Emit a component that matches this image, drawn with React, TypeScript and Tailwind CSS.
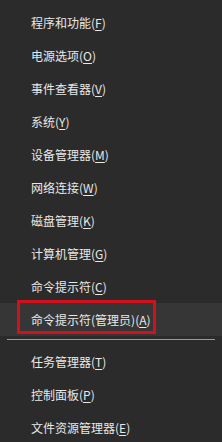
import React from "react";

interface Item {
  label: string;
  key: string;
  highlight?: boolean;
}

const top: Item[] = [
  { label: "程序和功能", key: "F" },
  { label: "电源选项", key: "O" },
  { label: "事件查看器", key: "V" },
  { label: "系统", key: "Y" },
  { label: "设备管理器", key: "M" },
  { label: "网络连接", key: "W" },
  { label: "磁盘管理", key: "K" },
  { label: "计算机管理", key: "G" },
  { label: "命令提示符", key: "C" },
  { label: "命令提示符(管理员)", key: "A", highlight: true },
];

const bottom: Item[] = [
  { label: "任务管理器", key: "T" },
  { label: "控制面板", key: "P" },
  { label: "文件资源管理器", key: "E" },
];

const Row: React.FC<{ item: Item }> = ({ item }) => (
  <div
    className={
      "relative flex h-[33px] items-center pl-[31px] text-[12px] text-[#e8e8e8] " +
      (item.highlight ? "bg-[#363636]" : "")
    }
  >
    <span>
      {item.label}(<span className="underline underline-offset-2">{item.key}</span>)
    </span>
    {item.highlight && (
      <div className="absolute left-[17px] top-[-3px] h-[34px] w-[139px] border-[3px] border-[#d3111c]" />
    )}
  </div>
);

const App: React.FC = () => {
  return (
    <div
      className="h-[442px] w-[222px] overflow-hidden bg-[#2b2b2b] pt-[6px]"
      style={{ fontFamily: '"Noto Sans CJK SC", "Noto Sans", sans-serif' }}
    >
      {top.map((it) => (
        <Row key={it.label} item={it} />
      ))}
      <div className="px-[7px] pb-[5px] pt-[3px]">
        <div className="h-px bg-[#9a9a9a]" />
      </div>
      {bottom.map((it) => (
        <Row key={it.label} item={it} />
      ))}
    </div>
  );
};

export default App;
